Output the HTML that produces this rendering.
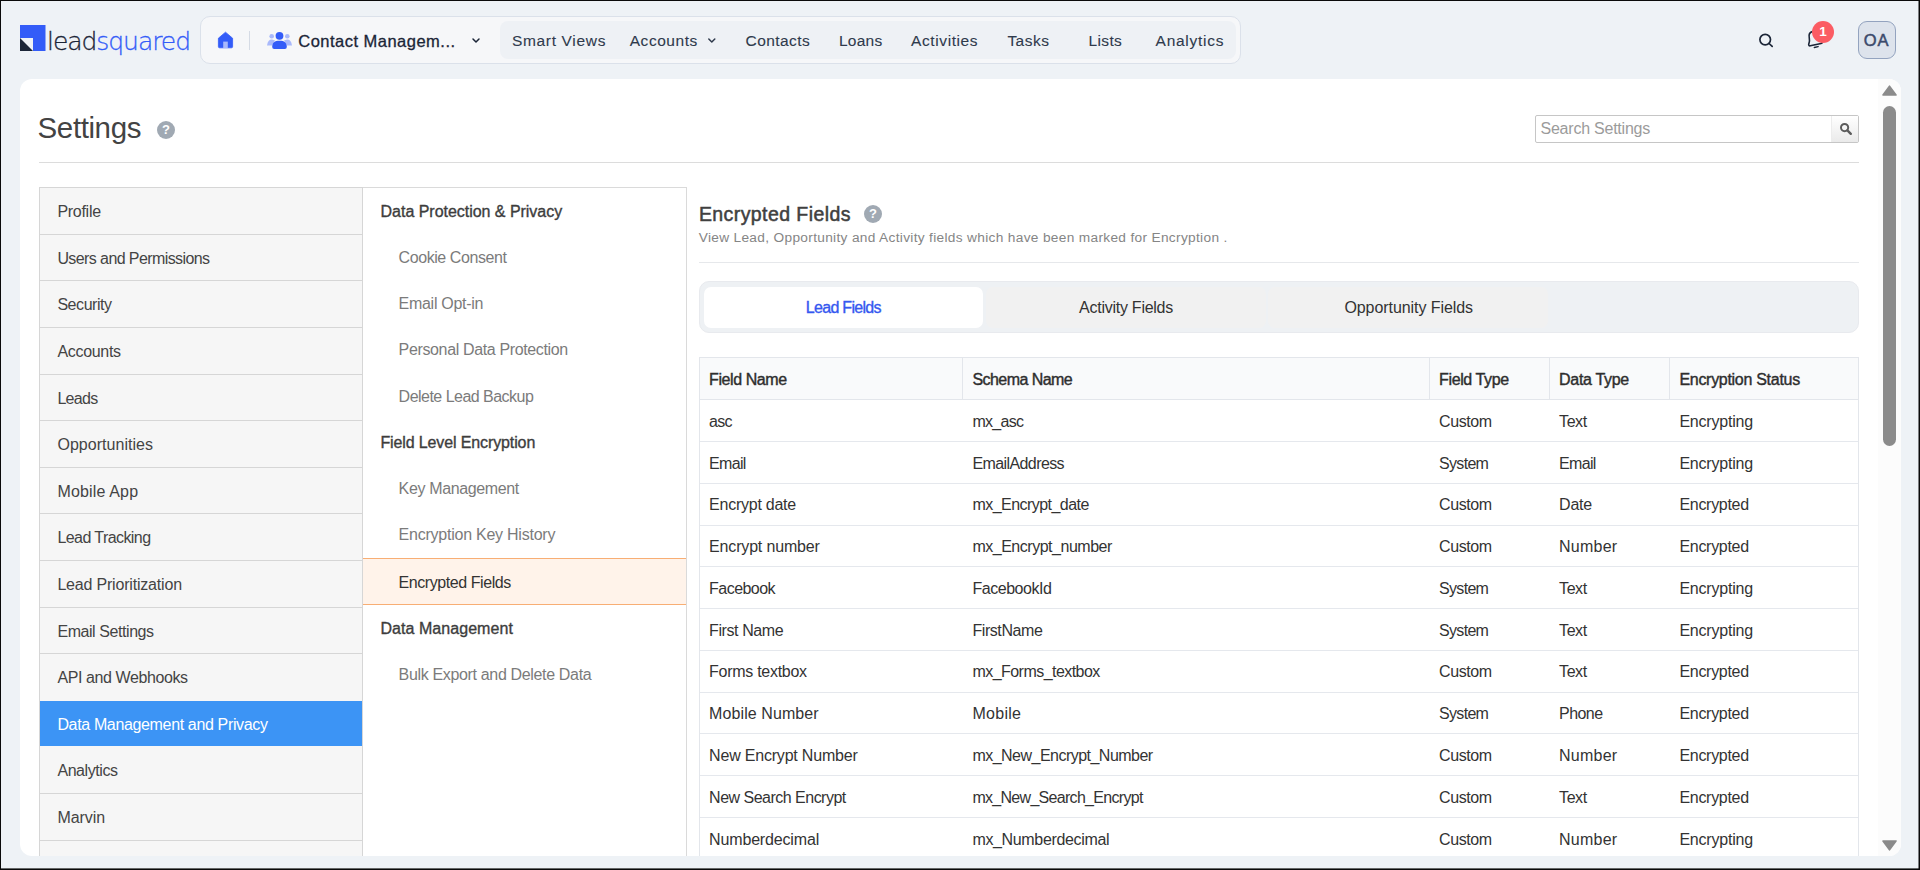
<!DOCTYPE html>
<html lang="en">
<head>
<meta charset="utf-8">
<title>Settings - Encrypted Fields</title>
<style>
*{box-sizing:border-box;margin:0;padding:0}
html,body{width:1920px;height:870px;overflow:hidden}
body{background:#eef2f6;font-family:"Liberation Sans","DejaVu Sans",sans-serif;color:#333;position:relative}
.abs{position:absolute}
.t{position:absolute;white-space:nowrap;line-height:20px}
.f-nav{font-size:15.5px;font-weight:normal;color:#2f3a4c;-webkit-text-stroke:.1px #2f3a4c}
.f-app{font-size:16.5px;font-weight:normal;color:#1b2537;-webkit-text-stroke:.3px #1b2537}
.f-lm{font-size:16px;font-weight:normal;color:#444}
.f-lma{font-size:16px;font-weight:normal;color:#fff}
.f-mg{font-size:16px;font-weight:normal;color:#3d3d3d;-webkit-text-stroke:.35px #3d3d3d}
.f-ms{font-size:16px;font-weight:normal;color:#7b7b7b}
.f-msa{font-size:16px;font-weight:normal;color:#333}
.f-h1{font-size:29.5px;font-weight:normal;color:#434343}
.f-h2{font-size:19.5px;font-weight:normal;color:#404040;-webkit-text-stroke:.5px #404040}
.f-sub{font-size:13.7px;font-weight:normal;color:#858585}
.f-tab{font-size:16px;font-weight:normal;color:#333}
.f-taba{font-size:16px;font-weight:normal;color:#3558f0;-webkit-text-stroke:.35px #3558f0}
.f-th{font-size:16px;font-weight:normal;color:#2e2e2e;-webkit-text-stroke:.4px #2e2e2e}
.f-td{font-size:16px;font-weight:normal;color:#333}
.f-ph{font-size:16px;font-weight:normal;color:#9b9b9b}
.f-av{font-size:16.5px;font-weight:normal;color:#3b4a6b;-webkit-text-stroke:.5px #3b4a6b}
.frame{position:absolute;left:0;top:0;width:1920px;height:870px;border-style:solid;border-color:#0a0a0a;border-width:1px;box-shadow:inset -1px 0 0 rgba(10,10,10,.5),inset 0 -1px 0 rgba(10,10,10,.6);pointer-events:none;z-index:50}
.logo-txt{position:absolute;left:47px;top:27px;font-family:"DejaVu Sans Light","DejaVu Sans",sans-serif;font-weight:200;font-size:25px;line-height:30px;letter-spacing:-1.05px;color:#1b2537;-webkit-text-stroke:.3px;white-space:nowrap}
.logo-txt b{font-weight:200;color:#335cf8}
.pill{position:absolute;left:200px;top:16px;width:1041px;height:48px;border:1px solid #dbe1ea;border-radius:10px;background:#f6f7f9}
.inner{position:absolute;left:500px;top:21px;width:736px;height:38px;border-radius:8px;background:#eef1f5}
.sep{position:absolute;left:249px;top:31px;width:1px;height:19px;background:#d5dbe5}
.avatar{position:absolute;left:1858px;top:21px;width:38px;height:38px;border-radius:9px;background:#dde3ec;border:1px solid #93a3bf}
.badge{position:absolute;left:1812px;top:21px;width:22px;height:22px;border-radius:11px;background:#fb5c63;color:#fff;font-weight:bold;font-size:13.5px;line-height:21px;text-align:center}
.panel{position:absolute;left:20px;top:79px;width:1881px;height:777px;background:#fff;border-radius:12px}
.hr{position:absolute;height:1px}
.help{position:absolute;width:18px;height:18px;border-radius:50%;background:#a0a9b3;color:#fff;font-weight:bold;font-size:13px;line-height:18px;text-align:center}
.search{position:absolute;left:1535px;top:115px;width:324px;height:28px;border:1px solid #c6c6c6;border-radius:2px;background:#fff}
.search i{position:absolute;right:0;top:0;width:27px;height:26px;border-left:1px solid #ececec;background:linear-gradient(#fff,#eaeaea)}
.lm{position:absolute;left:39px;top:187px;width:324px;height:669px;border-left:1px solid #d6d6d6;border-right:1px solid #d6d6d6;background:#f6f6f6}
.lm i{position:absolute;left:0;width:322px;height:1px;background:#d6d6d6}
.lm b{position:absolute;left:0;top:514px;width:322px;height:45px;background:#3c94f5}
.mm{position:absolute;left:363px;top:187px;width:324px;height:669px;border-top:1px solid #dadada;border-right:1px solid #dadada;background:#fff}
.mm .act{position:absolute;left:0;top:370px;width:323px;height:47px;background:#fff3ea;border-top:1px solid #f8ae74;border-bottom:1px solid #f8ae74}
.tabs{position:absolute;left:699px;top:281px;width:1160px;height:52px;border-radius:10px;background:#eef1f4;border:1px solid #e8eaee}
.tabs i{position:absolute;top:5px;height:41px;border-radius:7px;background:#f1f1f1}
.tbl{position:absolute;left:699px;top:357px;width:1160px;height:499px;border:1px solid #e3e6eb;border-bottom:none}
.thd{position:absolute;left:0;top:0;width:1158px;height:42px;background:#f9fafb;border-bottom:1px solid #e3e6eb}
.vl{position:absolute;top:0;width:1px;height:41px;background:#e3e6eb}
.rl{position:absolute;left:0;width:1158px;height:1px;background:#e5e8ed}
.sb{position:absolute;left:1878px;top:79px;width:23px;height:777px;background:#fcfcfc;border-radius:0 12px 12px 0}
.thumb{position:absolute;left:1883px;top:106px;width:13px;height:340px;border-radius:6.5px;background:#8b8b8b}
</style>
</head>
<body>
<!-- top bar -->
<svg class="abs" style="left:20px;top:25px" width="26" height="26" viewBox="0 0 26 26"><path d="M0 0H25.5V26H13V13H0Z" fill="#335cf8"/><path d="M0 13L13 26H0Z" fill="#1b2537"/></svg>
<div class="logo-txt">lead<b>squared</b></div>
<div class="pill"></div>
<div class="inner"></div>
<svg class="abs" style="left:217px;top:31px" width="17" height="18" viewBox="0 0 17 18"><path d="M8.5 1.2 L15.6 7.2 V15.6 Q15.6 16.8 14.4 16.8 H2.6 Q1.4 16.8 1.4 15.6 V7.2 Z" fill="#335cf8" stroke="#335cf8" stroke-width="0.8" stroke-linejoin="round"/><rect x="6.2" y="10.6" width="4.6" height="6.4" fill="#a9b9fb"/></svg>
<div class="sep"></div>
<svg class="abs" style="left:266px;top:31px" width="27" height="19" viewBox="0 0 27 19"><g fill="#a9b9fb"><circle cx="5.7" cy="5.2" r="2.3"/><circle cx="21.3" cy="5.2" r="2.3"/><path d="M1 14.5 Q2 8.3 6 8.6 L9 9.5 L6 14.5 Z"/><path d="M26 14.5 Q25 8.3 21 8.6 L18 9.5 L21 14.5 Z"/></g><circle cx="13.5" cy="4.8" r="3.9" fill="#335cf8"/><path d="M6.2 16 C6.2 11.6 8.6 9.7 13.5 9.7 C18.4 9.7 20.8 11.6 20.8 16 Q20.8 18 18.8 18 H8.2 Q6.2 18 6.2 16 Z" fill="#335cf8"/></svg>
<svg class="abs" style="left:471px;top:37px" width="10" height="7" viewBox="0 0 10 7"><path d="M2 2L5 5L8 2" fill="none" stroke="#1b2537" stroke-width="1.5" stroke-linecap="round" stroke-linejoin="round"/></svg>
<svg class="abs" style="left:707px;top:37px" width="10" height="7" viewBox="0 0 10 7"><path d="M1.8 2L4.8 5L7.8 2" fill="none" stroke="#2f3a4c" stroke-width="1.5" stroke-linecap="round" stroke-linejoin="round"/></svg>
<svg class="abs" style="left:1757px;top:32px" width="18" height="16" viewBox="0 0 18 16"><circle cx="8.2" cy="7.6" r="5.3" fill="none" stroke="#1b2537" stroke-width="1.7"/><path d="M12.1 11.5L15.2 14.4" stroke="#1b2537" stroke-width="1.7" stroke-linecap="round"/></svg>
<svg class="abs" style="left:1805px;top:29px;transform:rotate(-12deg)" width="19" height="20" viewBox="0 0 19 20"><path d="M9.5 2.2 C6 2.2 4.6 5 4.6 8 C4.6 12 2.6 13.2 2.6 14.6 C2.6 15.4 3.2 15.8 4 15.8 H15 C15.8 15.8 16.4 15.4 16.4 14.6 C16.4 13.2 14.4 12 14.4 8 C14.4 5 13 2.2 9.5 2.2 Z" fill="none" stroke="#1b2537" stroke-width="1.6" stroke-linejoin="round"/><path d="M7.6 18.2 H11.4" stroke="#1b2537" stroke-width="1.5" stroke-linecap="round"/></svg>
<div class="badge">1</div>
<div class="avatar"></div>
<!-- main panel -->
<div class="panel"></div>
<div class="sb"></div>
<svg class="abs" style="left:1881px;top:84px" width="17" height="13" viewBox="0 0 17 13"><path d="M8.5 2.2L15 11H2Z" fill="#8b8b8b" stroke="#8b8b8b" stroke-width="1.6" stroke-linejoin="round"/></svg>
<div class="thumb"></div>
<svg class="abs" style="left:1881px;top:839px" width="17" height="13" viewBox="0 0 17 13"><path d="M8.5 10.8L15 2H2Z" fill="#8b8b8b" stroke="#8b8b8b" stroke-width="1.6" stroke-linejoin="round"/></svg>
<div class="help" style="left:157px;top:121px">?</div>
<div class="hr" style="left:39px;top:162px;width:1820px;background:#dcdcdc"></div>
<div class="search"><i></i>
<svg class="abs" style="left:303px;top:6px" width="14" height="14" viewBox="0 0 14 14"><circle cx="5.6" cy="5.6" r="3.6" fill="none" stroke="#5c5c5c" stroke-width="2"/><path d="M8.4 8.4L11.8 11.8" stroke="#5c5c5c" stroke-width="2.4" stroke-linecap="round"/></svg>
</div>
<div class="lm"><b></b><i style="top:0px"></i><i style="top:47px"></i><i style="top:93px"></i><i style="top:140px"></i><i style="top:187px"></i><i style="top:233px"></i><i style="top:280px"></i><i style="top:326px"></i><i style="top:373px"></i><i style="top:420px"></i><i style="top:466px"></i><i style="top:606px"></i><i style="top:653px"></i></div>
<div class="mm"><div class="act"></div></div>
<div class="help" style="left:864px;top:205px">?</div>
<div class="hr" style="left:699px;top:262px;width:1160px;background:#e6e8eb"></div>
<div class="tabs"><i style="left:4px;width:279px;background:#fff"></i><i style="left:286px;width:280px"></i><i style="left:568px;width:280px"></i></div>
<div class="tbl"><div class="thd"></div><div class="vl" style="left:262px"></div><div class="vl" style="left:729px"></div><div class="vl" style="left:849px"></div><div class="vl" style="left:969px"></div><div class="rl" style="top:83px"></div><div class="rl" style="top:125px"></div><div class="rl" style="top:167px"></div><div class="rl" style="top:208px"></div><div class="rl" style="top:250px"></div><div class="rl" style="top:292px"></div><div class="rl" style="top:334px"></div><div class="rl" style="top:375px"></div><div class="rl" style="top:417px"></div><div class="rl" style="top:459px"></div></div>
<div class="t f-nav" style="left:511.9px;top:31px;letter-spacing:0.68px">Smart Views</div>
<div class="t f-nav" style="left:629.7px;top:31px;letter-spacing:0.55px">Accounts</div>
<div class="t f-nav" style="left:745.6px;top:31px;letter-spacing:0.43px">Contacts</div>
<div class="t f-nav" style="left:838.9px;top:31px;letter-spacing:0.29px">Loans</div>
<div class="t f-nav" style="left:911.1px;top:31px;letter-spacing:0.59px">Activities</div>
<div class="t f-nav" style="left:1007.4px;top:31px;letter-spacing:0.47px">Tasks</div>
<div class="t f-nav" style="left:1088.6px;top:31px;letter-spacing:0.33px">Lists</div>
<div class="t f-nav" style="left:1155.6px;top:31px;letter-spacing:0.72px">Analytics</div>
<div class="t f-app" style="left:298.3px;top:31px;letter-spacing:0.48px">Contact Managem...</div>
<div class="t f-av" style="left:1863.8px;top:30px;letter-spacing:0.80px">OA</div>
<div class="t f-h1" style="left:37.6px;top:118px;letter-spacing:-0.40px">Settings</div>
<div class="t f-ph" style="left:1540.5px;top:119px;letter-spacing:-0.23px">Search Settings</div>
<div class="t f-lm" style="left:57.4px;top:202px;letter-spacing:-0.28px">Profile</div>
<div class="t f-lm" style="left:57.4px;top:249px;letter-spacing:-0.59px">Users and Permissions</div>
<div class="t f-lm" style="left:57.4px;top:295px;letter-spacing:-0.44px">Security</div>
<div class="t f-lm" style="left:57.4px;top:342px;letter-spacing:-0.30px">Accounts</div>
<div class="t f-lm" style="left:57.4px;top:389px;letter-spacing:-0.70px">Leads</div>
<div class="t f-lm" style="left:57.4px;top:435px;letter-spacing:0.04px">Opportunities</div>
<div class="t f-lm" style="left:57.4px;top:482px;letter-spacing:0.17px">Mobile App</div>
<div class="t f-lm" style="left:57.4px;top:528px;letter-spacing:-0.57px">Lead Tracking</div>
<div class="t f-lm" style="left:57.4px;top:575px;letter-spacing:-0.19px">Lead Prioritization</div>
<div class="t f-lm" style="left:57.4px;top:622px;letter-spacing:-0.43px">Email Settings</div>
<div class="t f-lm" style="left:57.4px;top:668px;letter-spacing:-0.40px">API and Webhooks</div>
<div class="t f-lma" style="left:57.4px;top:715px;letter-spacing:-0.35px">Data Management and Privacy</div>
<div class="t f-lm" style="left:57.4px;top:761px;letter-spacing:-0.42px">Analytics</div>
<div class="t f-lm" style="left:57.4px;top:808px;letter-spacing:-0.06px">Marvin</div>
<div class="t f-mg" style="left:380.6px;top:202px;letter-spacing:-0.03px">Data Protection &amp; Privacy</div>
<div class="t f-ms" style="left:398.6px;top:248px;letter-spacing:-0.43px">Cookie Consent</div>
<div class="t f-ms" style="left:398.6px;top:294px;letter-spacing:-0.29px">Email Opt-in</div>
<div class="t f-ms" style="left:398.6px;top:340px;letter-spacing:-0.36px">Personal Data Protection</div>
<div class="t f-ms" style="left:398.6px;top:387px;letter-spacing:-0.52px">Delete Lead Backup</div>
<div class="t f-mg" style="left:380.4px;top:433px;letter-spacing:-0.12px">Field Level Encryption</div>
<div class="t f-ms" style="left:398.6px;top:479px;letter-spacing:-0.36px">Key Management</div>
<div class="t f-ms" style="left:398.6px;top:525px;letter-spacing:-0.24px">Encryption Key History</div>
<div class="t f-msa" style="left:398.6px;top:573px;letter-spacing:-0.43px">Encrypted Fields</div>
<div class="t f-mg" style="left:380.4px;top:619px;letter-spacing:0.06px">Data Management</div>
<div class="t f-ms" style="left:398.6px;top:665px;letter-spacing:-0.34px">Bulk Export and Delete Data</div>
<div class="t f-h2" style="left:698.9px;top:204px;letter-spacing:0.42px">Encrypted Fields</div>
<div class="t f-sub" style="left:698.7px;top:228px;letter-spacing:0.32px">View Lead, Opportunity and Activity fields which have been marked for Encryption .</div>
<div class="t f-taba" style="left:805.8px;top:298px;letter-spacing:-0.70px">Lead Fields</div>
<div class="t f-tab" style="left:1079.1px;top:298px;letter-spacing:-0.26px">Activity Fields</div>
<div class="t f-tab" style="left:1344.4px;top:298px;letter-spacing:-0.07px">Opportunity Fields</div>
<div class="t f-th" style="left:709.1px;top:370px;letter-spacing:-0.42px">Field Name</div>
<div class="t f-th" style="left:972.4px;top:370px;letter-spacing:-0.55px">Schema Name</div>
<div class="t f-th" style="left:1439.1px;top:370px;letter-spacing:-0.39px">Field Type</div>
<div class="t f-th" style="left:1559.1px;top:370px;letter-spacing:-0.33px">Data Type</div>
<div class="t f-th" style="left:1679.4px;top:370px;letter-spacing:-0.29px">Encryption Status</div>
<div class="t f-td" style="left:709.1px;top:412px;letter-spacing:-0.70px">asc</div>
<div class="t f-td" style="left:972.4px;top:412px;letter-spacing:-0.70px">mx_asc</div>
<div class="t f-td" style="left:1439.1px;top:412px;letter-spacing:-0.43px">Custom</div>
<div class="t f-td" style="left:1559.1px;top:412px;letter-spacing:-0.45px">Text</div>
<div class="t f-td" style="left:1679.4px;top:412px;letter-spacing:-0.21px">Encrypting</div>
<div class="t f-td" style="left:709.1px;top:454px;letter-spacing:-0.70px">Email</div>
<div class="t f-td" style="left:972.4px;top:454px;letter-spacing:-0.59px">EmailAddress</div>
<div class="t f-td" style="left:1439.1px;top:454px;letter-spacing:-0.70px">System</div>
<div class="t f-td" style="left:1559.1px;top:454px;letter-spacing:-0.70px">Email</div>
<div class="t f-td" style="left:1679.4px;top:454px;letter-spacing:-0.21px">Encrypting</div>
<div class="t f-td" style="left:709.1px;top:495px;letter-spacing:-0.25px">Encrypt date</div>
<div class="t f-td" style="left:972.4px;top:495px;letter-spacing:-0.54px">mx_Encrypt_date</div>
<div class="t f-td" style="left:1439.1px;top:495px;letter-spacing:-0.43px">Custom</div>
<div class="t f-td" style="left:1559.1px;top:495px;letter-spacing:-0.27px">Date</div>
<div class="t f-td" style="left:1679.4px;top:495px;letter-spacing:-0.29px">Encrypted</div>
<div class="t f-td" style="left:709.1px;top:537px;letter-spacing:-0.17px">Encrypt number</div>
<div class="t f-td" style="left:972.4px;top:537px;letter-spacing:-0.48px">mx_Encrypt_number</div>
<div class="t f-td" style="left:1439.1px;top:537px;letter-spacing:-0.43px">Custom</div>
<div class="t f-td" style="left:1559.1px;top:537px;letter-spacing:0.22px">Number</div>
<div class="t f-td" style="left:1679.4px;top:537px;letter-spacing:-0.29px">Encrypted</div>
<div class="t f-td" style="left:709.1px;top:579px;letter-spacing:-0.54px">Facebook</div>
<div class="t f-td" style="left:972.4px;top:579px;letter-spacing:-0.45px">FacebookId</div>
<div class="t f-td" style="left:1439.1px;top:579px;letter-spacing:-0.70px">System</div>
<div class="t f-td" style="left:1559.1px;top:579px;letter-spacing:-0.45px">Text</div>
<div class="t f-td" style="left:1679.4px;top:579px;letter-spacing:-0.21px">Encrypting</div>
<div class="t f-td" style="left:709.1px;top:621px;letter-spacing:-0.41px">First Name</div>
<div class="t f-td" style="left:972.4px;top:621px;letter-spacing:-0.42px">FirstName</div>
<div class="t f-td" style="left:1439.1px;top:621px;letter-spacing:-0.70px">System</div>
<div class="t f-td" style="left:1559.1px;top:621px;letter-spacing:-0.45px">Text</div>
<div class="t f-td" style="left:1679.4px;top:621px;letter-spacing:-0.21px">Encrypting</div>
<div class="t f-td" style="left:709.1px;top:662px;letter-spacing:-0.28px">Forms textbox</div>
<div class="t f-td" style="left:972.4px;top:662px;letter-spacing:-0.54px">mx_Forms_textbox</div>
<div class="t f-td" style="left:1439.1px;top:662px;letter-spacing:-0.43px">Custom</div>
<div class="t f-td" style="left:1559.1px;top:662px;letter-spacing:-0.45px">Text</div>
<div class="t f-td" style="left:1679.4px;top:662px;letter-spacing:-0.29px">Encrypted</div>
<div class="t f-td" style="left:709.1px;top:704px;letter-spacing:0.09px">Mobile Number</div>
<div class="t f-td" style="left:972.4px;top:704px;letter-spacing:0.29px">Mobile</div>
<div class="t f-td" style="left:1439.1px;top:704px;letter-spacing:-0.70px">System</div>
<div class="t f-td" style="left:1559.1px;top:704px;letter-spacing:-0.57px">Phone</div>
<div class="t f-td" style="left:1679.4px;top:704px;letter-spacing:-0.29px">Encrypted</div>
<div class="t f-td" style="left:709.1px;top:746px;letter-spacing:-0.20px">New Encrypt Number</div>
<div class="t f-td" style="left:972.4px;top:746px;letter-spacing:-0.52px">mx_New_Encrypt_Number</div>
<div class="t f-td" style="left:1439.1px;top:746px;letter-spacing:-0.43px">Custom</div>
<div class="t f-td" style="left:1559.1px;top:746px;letter-spacing:0.22px">Number</div>
<div class="t f-td" style="left:1679.4px;top:746px;letter-spacing:-0.29px">Encrypted</div>
<div class="t f-td" style="left:709.1px;top:788px;letter-spacing:-0.51px">New Search Encrypt</div>
<div class="t f-td" style="left:972.4px;top:788px;letter-spacing:-0.70px">mx_New_Search_Encrypt</div>
<div class="t f-td" style="left:1439.1px;top:788px;letter-spacing:-0.43px">Custom</div>
<div class="t f-td" style="left:1559.1px;top:788px;letter-spacing:-0.45px">Text</div>
<div class="t f-td" style="left:1679.4px;top:788px;letter-spacing:-0.29px">Encrypted</div>
<div class="t f-td" style="left:709.1px;top:830px;letter-spacing:-0.16px">Numberdecimal</div>
<div class="t f-td" style="left:972.4px;top:830px;letter-spacing:-0.34px">mx_Numberdecimal</div>
<div class="t f-td" style="left:1439.1px;top:830px;letter-spacing:-0.43px">Custom</div>
<div class="t f-td" style="left:1559.1px;top:830px;letter-spacing:0.22px">Number</div>
<div class="t f-td" style="left:1679.4px;top:830px;letter-spacing:-0.21px">Encrypting</div>
<div class="frame"></div>
</body>
</html>
